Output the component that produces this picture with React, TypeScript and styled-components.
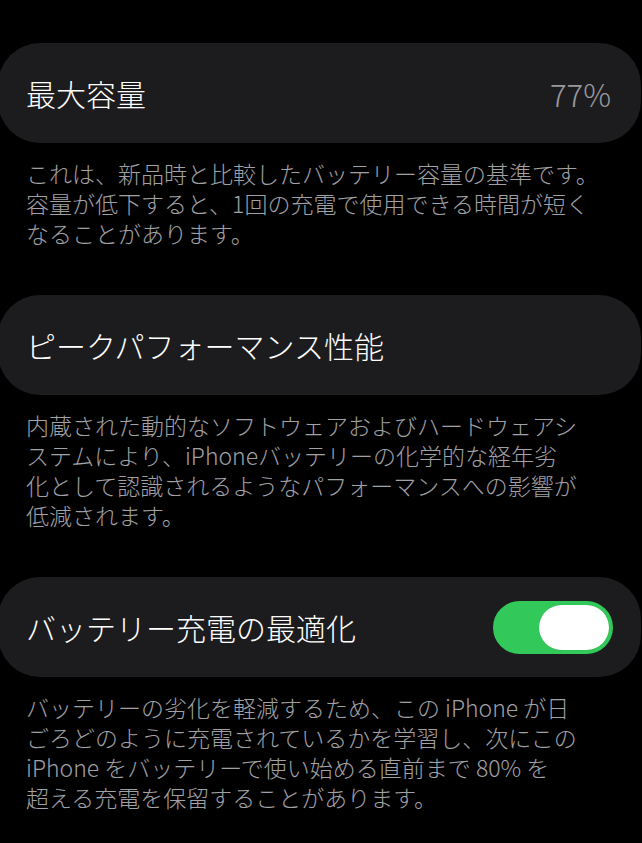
import React from "react";
import styled, { createGlobalStyle } from "styled-components";

const Global = createGlobalStyle`
  html, body {
    margin: 0;
    padding: 0;
    background: #000;
  }
  body {
    font-family: "Noto Sans CJK JP", "Noto Sans", sans-serif;
    -webkit-font-smoothing: antialiased;
    overflow: hidden;
  }
`;

const Page = styled.div`
  width: 642px;
  min-height: 843px;
  background: #000;
  padding-top: 43px;
  box-sizing: border-box;
  display: flex;
  flex-direction: column;
  overflow: hidden;
`;

const Section = styled.section`
  display: flex;
  flex-direction: column;
  margin-bottom: 47px;
`;

const Card = styled.div`
  margin-left: -2px;
  width: 643px;
  height: 100px;
  box-sizing: border-box;
  background: #1c1c1e;
  border-radius: 42px;
  display: flex;
  align-items: center;
  justify-content: space-between;
  padding: 0 28px 0 28px;
`;

const Title = styled.span`
  color: #ffffff;
  font-size: 30px;
  font-weight: 300;
  line-height: 1;
  white-space: nowrap;
`;

const Value = styled.span`
  color: #98989d;
  font-size: 31px;
  line-height: 1;
  font-weight: 300;
  margin-right: 2px;
`;

const Description = styled.p`
  margin: 15px 0 0 0;
  padding-left: 26px;
  color: #a1a1a6;
  font-size: 23px;
  font-weight: 300;
  line-height: 30px;
  white-space: nowrap;
`;

const Toggle = styled.div<{ $on: boolean }>`
  width: 120px;
  height: 53px;
  border-radius: 27px;
  background: ${(p) => (p.$on ? "#32c95a" : "#39393d")};
  display: flex;
  align-items: center;
  justify-content: ${(p) => (p.$on ? "flex-end" : "flex-start")};
  padding: 0 4px;
  box-sizing: border-box;
  flex-shrink: 0;
`;

const Knob = styled.div`
  width: 70px;
  height: 45px;
  border-radius: 23px;
  background: #ffffff;
  box-shadow: 0 0 1px rgba(0, 0, 0, 0.25);
`;

export default function App() {
  return (
    <>
      <Global />
      <Page>
        <Section>
          <Card>
            <Title>最大容量</Title>
            <Value>77%</Value>
          </Card>
          <Description>
            これは、新品時と比較したバッテリー容量の基準です。
            <br />
            容量が低下すると、1回の充電で使用できる時間が短く
            <br />
            なることがあります。
          </Description>
        </Section>
        <Section>
          <Card>
            <Title>ピークパフォーマンス性能</Title>
          </Card>
          <Description>
            内蔵された動的なソフトウェアおよびハードウェアシ
            <br />
            ステムにより、iPhoneバッテリーの化学的な経年劣
            <br />
            化として認識されるようなパフォーマンスへの影響が
            <br />
            低減されます。
          </Description>
        </Section>
        <Section>
          <Card>
            <Title>バッテリー充電の最適化</Title>
            <Toggle $on={true}>
              <Knob />
            </Toggle>
          </Card>
          <Description>
            バッテリーの劣化を軽減するため、この iPhone が日
            <br />
            ごろどのように充電されているかを学習し、次にこの
            <br />
            iPhone をバッテリーで使い始める直前まで 80% を
            <br />
            超える充電を保留することがあります。
          </Description>
        </Section>
      </Page>
    </>
  );
}
